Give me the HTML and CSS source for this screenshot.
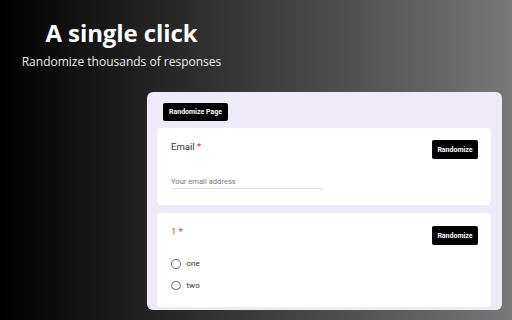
FILE: index.html
```html
<!DOCTYPE html>
<html>
<head>
<meta charset="utf-8">
<link rel="stylesheet" href="styles.css">
</head>
<body>
<div class="page">
  <header class="hero">
    <h1 class="title">A single click</h1>
    <p class="subtitle">Randomize thousands of responses</p>
  </header>
  <div class="panel">
    <button class="btn btn-page">Randomize Page</button>
    <div class="card card-email">
      <div class="row">
        <div class="label">Email <span class="req">*</span></div>
        <button class="btn">Randomize</button>
      </div>
      <div class="input">Your email address</div>
    </div>
    <div class="card card-q">
      <div class="row">
        <div class="label num">1 <span class="req">*</span></div>
        <button class="btn">Randomize</button>
      </div>
      <div class="options">
        <div class="opt"><span class="radio"></span><span class="opt-text">one</span></div>
        <div class="opt"><span class="radio"></span><span class="opt-text">two</span></div>
      </div>
    </div>
  </div>
</div>
</body>
</html>
```
FILE: styles.css
```css
html, body {
  margin: 0;
  padding: 0;
}
body {
  width: 512px;
  height: 320px;
  overflow: hidden;
  background: linear-gradient(90deg, #000 0%, #262626 32%, #5c5c5c 78%, #787878 100%);
}
.page {
  display: flex;
  flex-direction: column;
}
.hero {
  width: 243px;
  text-align: center;
  color: #fff;
  padding-top: 18px;
}
.title {
  margin: 0;
  font-family: "Open Sans", sans-serif;
  font-weight: 700;
  font-size: 24px;
  line-height: 30px;
  letter-spacing: -0.1px;
}
.subtitle {
  margin: 5px 0 0;
  font-family: "Open Sans", sans-serif;
  font-size: 12px;
  line-height: 18px;
  color: #ececec;
}
.panel {
  margin-top: 21px;
  margin-left: 147px;
  width: 355px;
  height: 218px;
  box-sizing: border-box;
  background: #eeeaf8;
  border-radius: 6px;
  padding: 11px 11px 3px 10px;
  display: flex;
  flex-direction: column;
  gap: 8px;
}
.btn {
  font-family: "Roboto", "Liberation Sans", sans-serif;
  font-weight: 700;
  font-size: 7px;
  color: #fff;
  background: #000;
  border: none;
  border-radius: 2px;
  padding: 0;
  width: 46px;
  height: 19px;
  cursor: pointer;
  flex-shrink: 0;
}
.btn-page {
  align-self: flex-start;
  margin-left: 6px;
  width: 65px;
  height: 18px;
  margin-bottom: -1px;
}
.card {
  background: #fff;
  border-radius: 4px;
  padding: 12px 13px 0 14px;
  font-family: "Roboto", "Liberation Sans", sans-serif;
}
.card-email {
  height: 77px;
  box-sizing: border-box;
}
.card-q {
  height: 94px;
  box-sizing: border-box;
  padding-top: 13px;
}
.row {
  display: flex;
  justify-content: space-between;
  align-items: flex-start;
}
.label {
  font-size: 9.5px;
  color: #333;
  padding-top: 1px;
}
.num {
  color: #b5652e;
  padding-top: 0;
  margin-top: 0;
}
.req {
  color: #d93025;
}
.input {
  width: 152px;
  margin-top: 18px;
  font-size: 7.6px;
  color: #777;
  padding-bottom: 2px;
  border-bottom: 1px solid #e0e0e0;
}
.options {
  margin-top: 14px;
  display: flex;
  flex-direction: column;
  gap: 12px;
}
.opt {
  display: flex;
  align-items: center;
  gap: 6px;
}
.radio {
  width: 7.5px;
  height: 7.5px;
  border: 1.5px solid #5f6368;
  border-radius: 50%;
}
.opt-text {
  font-size: 8px;
  color: #333;
}
```
